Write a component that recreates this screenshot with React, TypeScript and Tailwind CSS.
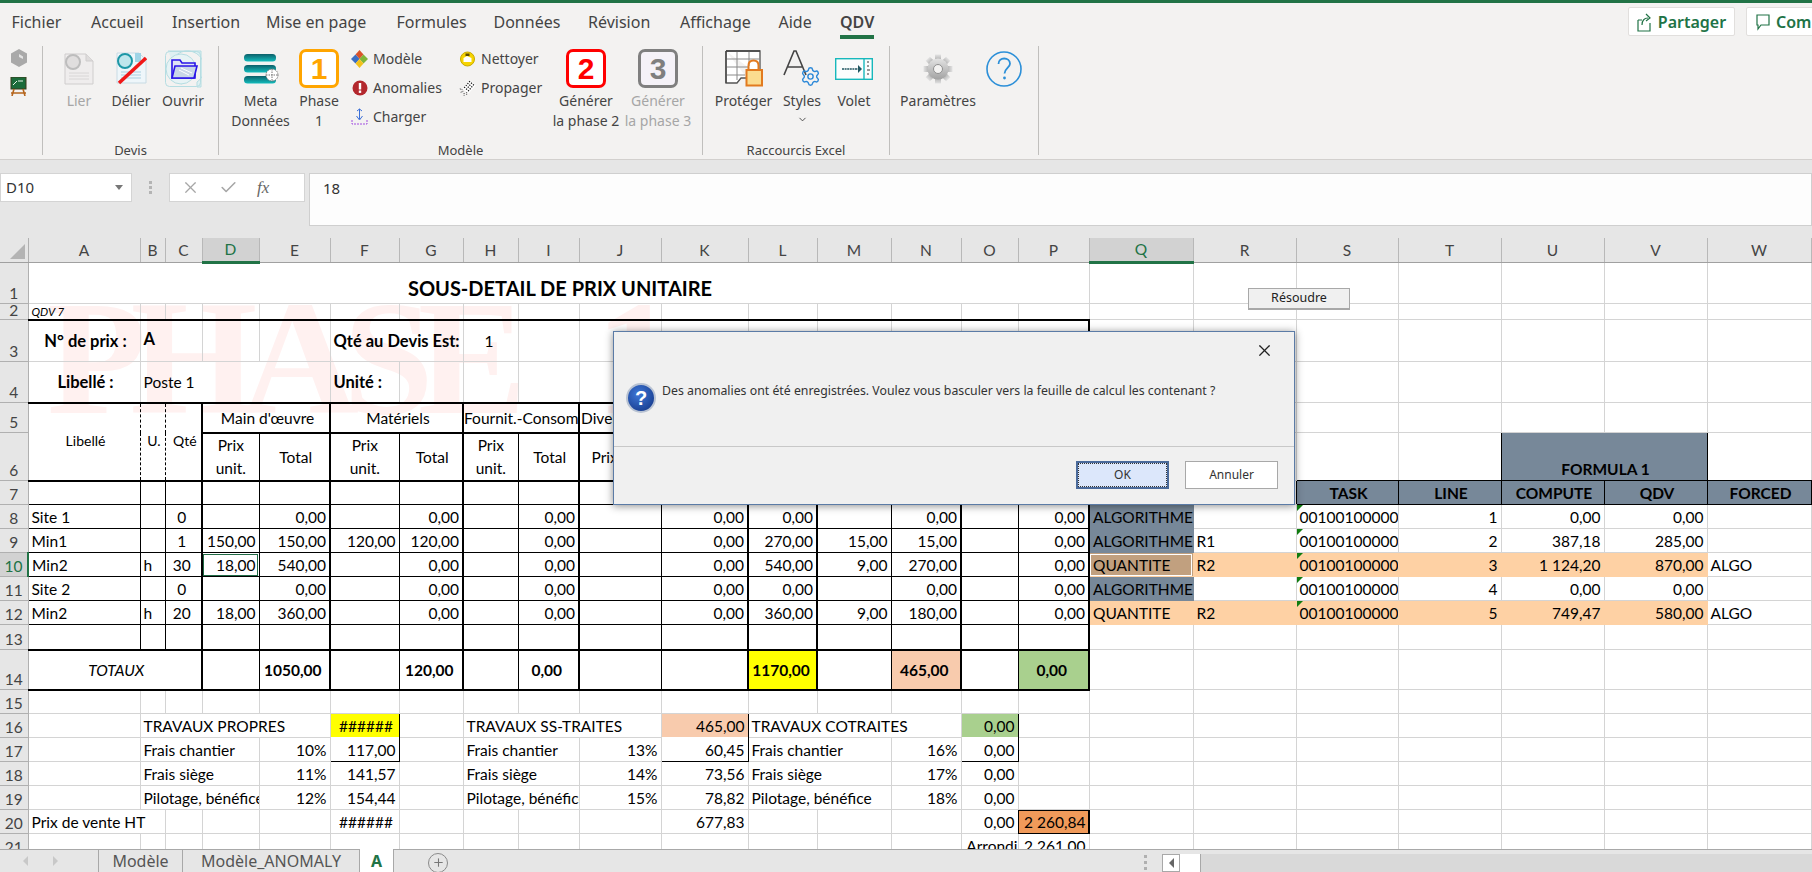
import type { ReactNode } from 'react'
import { Check, ChevronDown, Plus, Settings, X } from 'lucide-react'
import { twMerge } from 'tailwind-merge'

const COLS = 'ABCDEFGHIJKLMNOPQRSTUVW'.split('')

const COL_WIDTHS: Record<string, string> = {
  A: 'w-[112px]', B: 'w-[25px]', C: 'w-[37px]', D: 'w-[57px]', E: 'w-[71px]', F: 'w-[69px]',
  G: 'w-[64px]', H: 'w-[55px]', I: 'w-[61px]', J: 'w-[82px]', K: 'w-[87px]', L: 'w-[69px]',
  M: 'w-[74px]', N: 'w-[70px]', O: 'w-[57px]', P: 'w-[71px]', Q: 'w-[104px]', R: 'w-[103px]',
  S: 'w-[102px]', T: 'w-[103px]', U: 'w-[103px]', V: 'w-[103px]', W: 'w-[104px]',
}

const THICK_COLS = ['C', 'E', 'G', 'I', 'K', 'L', 'N', 'P']
const MAIN_COLS = COLS.slice(0, 16)

const SLATE = 'bg-[#778899] border-r-[#778899] border-b-[#778899]'
const ORANGE = 'bg-[#fed1a4] border-r-[#fed1a4] border-b-[#fed1a4]'
const HEAD = 'bg-[#778899] border-r-black border-b-black font-bold text-center'
const TOTAL = 'font-bold text-center align-middle'
const MID = 'align-middle'
const BOLD = 'font-bold align-middle text-[16.5px]'
const HEADER = 'text-center align-middle'
const UNIT = 'text-center align-middle whitespace-normal leading-[23px] px-1'
const LIBEL = 'text-center align-middle text-[14px] pb-[2px] [border-right-style:dashed] border-r-black'
const CENTER = 'text-center'
const BOX_TOP = 'border-r-black border-b-transparent'
const BOX_BOT = 'border-r-black border-b-black'

type CellDef = {
  t?: string
  span?: number
  rowSpan?: number
  cls?: string
  mark?: boolean
}

type RowDef = {
  n: number
  h: string
  main?: boolean
  bottom?: string
  skip?: string[]
  selected?: boolean
  cells: Record<string, string | CellDef>
}

const task = (cls = ''): CellDef => ({ t: '00100100000', mark: true, cls })

const ROWS: RowDef[] = [
  {
    n: 1,
    h: 'h-[40px]',
    cells: { A: { t: 'SOUS-DETAIL DE PRIX UNITAIRE', span: 16, cls: 'text-center font-bold text-[20px] align-middle pt-[9px]' } },
  },
  {
    n: 2,
    h: 'h-[16px]',
    bottom: 'border-b-2 border-b-black',
    cells: { A: { t: 'QDV 7', cls: 'italic text-[11.5px] leading-[14px] align-middle' } },
  },
  {
    n: 3,
    h: 'h-[42px]',
    cells: {
      A: { t: 'N° de prix :', cls: `${BOLD} text-center` },
      B: { t: 'A', span: 2, cls: `${BOLD} pb-[4px]` },
      F: { t: 'Qté au Devis Est:', span: 2, cls: BOLD },
      H: { t: '1', cls: `${MID} text-center` },
      P: { cls: 'border-r-2 border-r-black' },
    },
  },
  {
    n: 4,
    h: 'h-[41px]',
    bottom: 'border-b-2 border-b-black',
    cells: {
      A: { t: 'Libellé :', cls: `${BOLD} text-center` },
      B: { t: 'Poste 1', span: 4, cls: MID },
      F: { t: 'Unité :', cls: BOLD },
      P: { cls: 'border-r-2 border-r-black' },
    },
  },
  {
    n: 5,
    h: 'h-[30px]',
    main: true,
    bottom: 'border-b-2 border-b-black',
    cells: {
      A: { t: 'Libellé', rowSpan: 2, cls: LIBEL },
      B: { t: 'U.', rowSpan: 2, cls: LIBEL },
      C: { t: 'Qté', rowSpan: 2, cls: `${LIBEL} [border-right-style:solid]` },
      D: { t: "Main d'œuvre", span: 2, cls: HEADER },
      F: { t: 'Matériels', span: 2, cls: HEADER },
      H: { t: 'Fournit.-Consom', span: 2, cls: 'align-middle indent-[-3px]' },
      J: { t: 'Divers', span: 2, cls: 'align-middle pl-[1px]' },
    },
  },
  {
    n: 6,
    h: 'h-[47px]',
    main: true,
    bottom: 'border-b-2 border-b-black',
    skip: ['A', 'B', 'C'],
    cells: {
      D: { t: 'Prix unit.', cls: UNIT },
      E: { t: 'Total', cls: HEADER },
      F: { t: 'Prix unit.', cls: UNIT },
      G: { t: 'Total', cls: HEADER },
      H: { t: 'Prix unit.', cls: UNIT },
      I: { t: 'Total', cls: HEADER },
      J: { t: 'Prix unit.', cls: HEADER },
      S: { cls: 'border-b-black' },
      T: { cls: 'border-b-black border-r-black' },
      U: { t: 'FORMULA 1', span: 2, cls: HEAD },
      W: { cls: 'border-b-black' },
    },
  },
  {
    n: 7,
    h: 'h-[24px]',
    main: true,
    bottom: 'border-b-black',
    cells: {
      R: { cls: 'border-r-black' },
      S: { t: 'TASK', cls: HEAD },
      T: { t: 'LINE', cls: HEAD },
      U: { t: 'COMPUTE', cls: HEAD },
      V: { t: 'QDV', cls: HEAD },
      W: { t: 'FORCED', cls: HEAD },
    },
  },
  {
    n: 8,
    h: 'h-[24px]',
    main: true,
    bottom: 'border-b-black',
    cells: {
      A: 'Site 1', C: { t: '0', cls: CENTER }, E: '0,00', G: '0,00', I: '0,00', K: '0,00', L: '0,00', N: '0,00', P: '0,00',
      Q: { t: 'ALGORITHME', cls: SLATE }, S: task(), T: '1', U: '0,00', V: '0,00',
    },
  },
  {
    n: 9,
    h: 'h-[24px]',
    main: true,
    bottom: 'border-b-black',
    cells: {
      A: 'Min1', C: { t: '1', cls: CENTER }, D: '150,00', E: '150,00', F: '120,00', G: '120,00', I: '0,00', K: '0,00', L: '270,00', M: '15,00', N: '15,00', P: '0,00',
      Q: { t: 'ALGORITHME', cls: SLATE }, R: 'R1', S: task(), T: '2', U: '387,18', V: '285,00',
    },
  },
  {
    n: 10,
    h: 'h-[24px]',
    main: true,
    bottom: 'border-b-black',
    selected: true,
    cells: {
      A: 'Min2', B: 'h', C: { t: '30', cls: CENTER },
      D: { t: '18,00', cls: 'outline outline-1 outline-[#1f6b45] -outline-offset-2' },
      E: '540,00', G: '0,00', I: '0,00', K: '0,00', L: '540,00', M: '9,00', N: '270,00', P: '0,00',
      Q: { t: 'QUANTITE', cls: 'bg-[#c1a07f] border-r-[#fed1a4] border-b-[#fed1a4] outline outline-1 outline-white -outline-offset-2' },
      R: { t: 'R2', cls: ORANGE }, S: task(ORANGE), T: { t: '3', cls: ORANGE }, U: { t: '1 124,20', cls: ORANGE }, V: { t: '870,00', cls: ORANGE }, W: 'ALGO',
    },
  },
  {
    n: 11,
    h: 'h-[24px]',
    main: true,
    bottom: 'border-b-black',
    cells: {
      A: 'Site 2', C: { t: '0', cls: CENTER }, E: '0,00', G: '0,00', I: '0,00', K: '0,00', L: '0,00', N: '0,00', P: '0,00',
      Q: { t: 'ALGORITHME', cls: SLATE }, S: task(), T: '4', U: '0,00', V: '0,00',
    },
  },
  {
    n: 12,
    h: 'h-[24px]',
    main: true,
    bottom: 'border-b-black',
    cells: {
      A: 'Min2', B: 'h', C: { t: '20', cls: CENTER }, D: '18,00', E: '360,00', G: '0,00', I: '0,00', K: '0,00', L: '360,00', M: '9,00', N: '180,00', P: '0,00',
      Q: { t: 'QUANTITE', cls: ORANGE }, R: { t: 'R2', cls: ORANGE }, S: task(ORANGE), T: { t: '5', cls: ORANGE }, U: { t: '749,47', cls: ORANGE }, V: { t: '580,00', cls: ORANGE }, W: 'ALGO',
    },
  },
  { n: 13, h: 'h-[25px]', main: true, bottom: 'border-b-2 border-b-black', cells: {} },
  {
    n: 14,
    h: 'h-[40px]',
    main: true,
    bottom: 'border-b-2 border-b-black',
    cells: {
      A: { t: 'TOTAUX', span: 3, cls: 'italic text-center align-middle' },
      E: { t: '1050,00', cls: TOTAL },
      G: { t: '120,00', cls: TOTAL },
      I: { t: '0,00', cls: TOTAL },
      L: { t: '1170,00', cls: `${TOTAL} bg-[#ffff00]` },
      N: { t: '465,00', cls: `${TOTAL} bg-[#f8cbad]` },
      P: { t: '0,00', cls: `${TOTAL} bg-[#a9d08e]` },
    },
  },
  { n: 15, h: 'h-[24px]', cells: {} },
  {
    n: 16,
    h: 'h-[24px]',
    cells: {
      B: { t: 'TRAVAUX PROPRES', span: 4 },
      F: { t: '######', cls: `${BOX_TOP} bg-[#ffff00] text-center` },
      H: { t: 'TRAVAUX SS-TRAITES', span: 3 },
      K: { t: '465,00', cls: `${BOX_TOP} bg-[#f8cbad]` },
      L: { t: 'TRAVAUX COTRAITES', span: 3 },
      O: { t: '0,00', cls: `${BOX_TOP} bg-[#a9d08e]` },
    },
  },
  {
    n: 17,
    h: 'h-[24px]',
    cells: {
      B: { t: 'Frais chantier', span: 3 }, E: '10%', F: { t: '117,00', cls: BOX_BOT },
      H: { t: 'Frais chantier', span: 2 }, J: '13%', K: { t: '60,45', cls: BOX_BOT },
      L: { t: 'Frais chantier', span: 2 }, N: '16%', O: { t: '0,00', cls: BOX_BOT },
    },
  },
  {
    n: 18,
    h: 'h-[24px]',
    cells: {
      B: { t: 'Frais siège', span: 3 }, E: '11%', F: '141,57',
      H: { t: 'Frais siège', span: 2 }, J: '14%', K: '73,56',
      L: { t: 'Frais siège', span: 2 }, N: '17%', O: '0,00',
    },
  },
  {
    n: 19,
    h: 'h-[24px]',
    cells: {
      B: { t: 'Pilotage, bénéfice', span: 3 }, E: '12%', F: '154,44',
      H: { t: 'Pilotage, bénéfice', span: 2 }, J: '15%', K: '78,82',
      L: { t: 'Pilotage, bénéfice', span: 2 }, N: '18%', O: '0,00',
    },
  },
  {
    n: 20,
    h: 'h-[24px]',
    cells: {
      A: { t: 'Prix de vente HT', span: 2 },
      F: { t: '######', cls: CENTER },
      K: '677,83',
      O: '0,00',
      P: { t: '2 260,84', cls: 'bg-[#f09a5a] border-r-black border-b-black outline outline-1 outline-black -outline-offset-1' },
    },
  },
  {
    n: 21,
    h: 'h-[24px]',
    cells: { O: { t: 'Arrondi', cls: 'text-right' }, P: '2 261,00' },
  },
]

function isNumeric(text?: string) {
  return !!text && /^[\d ,%]+$/.test(text)
}

function SheetCell({ col, last, row, cell }: { col: string; last: string; row: RowDef; cell: CellDef }) {
  const inMain = MAIN_COLS.includes(col)
  const right = row.main && inMain ? (THICK_COLS.includes(last) ? 'border-r-2 border-r-black' : 'border-r-black') : ''
  const bottom = inMain ? row.bottom : ''
  const align = isNumeric(cell.t) && !cell.mark ? 'text-right pr-[3px]' : 'pl-[3px]'

  return (
    <td
      colSpan={cell.span}
      rowSpan={cell.rowSpan}
      className={twMerge(
        'relative p-0 border-r border-b border-r-[#d4d4d4] border-b-[#d4d4d4] align-bottom whitespace-nowrap overflow-hidden leading-[22px]',
        align,
        right,
        bottom,
        cell.cls,
      )}
    >
      {cell.mark && (
        <span className="absolute top-0 left-0 w-0 h-0 border-t-[6px] border-r-[6px] border-t-[#107c10] border-r-transparent" />
      )}
      {cell.t}
    </td>
  )
}

function SheetRow({ row }: { row: RowDef }) {
  const tds: ReactNode[] = []
  for (let i = 0; i < COLS.length; i++) {
    const col = COLS[i]
    if (row.skip?.includes(col)) continue
    const raw = row.cells[col] ?? {}
    const cell: CellDef = typeof raw === 'string' ? { t: raw } : raw
    const span = cell.span ?? 1
    tds.push(<SheetCell key={col} col={col} last={COLS[i + span - 1]} row={row} cell={cell} />)
    i += span - 1
  }

  return (
    <tr className={row.h}>
      <td
        className={twMerge(
          'p-0 bg-[#e6e6e6] text-[#444] text-center align-bottom leading-[20px] border-r border-b border-r-[#b0b0b0] border-b-[#b0b0b0] overflow-hidden',
          row.n === 2 && 'leading-[12px] pb-[3px]',
          row.selected && 'bg-[#d2d2d2] text-[#217346] border-r-2 border-r-[#217346]',
        )}
      >
        {row.n}
      </td>
      {tds}
    </tr>
  )
}

function Spreadsheet() {
  return (
    <table className="relative table-fixed border-collapse w-[1811px] text-[15.5px] text-black font-['Lato',sans-serif]">
      <colgroup>
        <col className="w-[28px]" />
        {COLS.map((col) => (
          <col key={col} className={COL_WIDTHS[col]} />
        ))}
      </colgroup>
      <thead>
        <tr className="h-[24px]">
          <th className="p-0 bg-[#e6e6e6] border-r border-b border-r-[#b0b0b0] border-b-[#a0a0a0]">
            <div className="flex justify-end items-end h-[23px] pr-[3px] pb-[3px]">
              <svg width="15" height="15" viewBox="0 0 15 15">
                <path d="M15 0V15H0Z" fill="#b4b4b4" />
              </svg>
            </div>
          </th>
          {COLS.map((col) => {
            const active = col === 'D' || col === 'Q'
            return (
              <th
                key={col}
                className={twMerge(
                  'p-0 font-normal bg-[#e6e6e6] text-[#444] border-r border-b border-r-[#b8b8b8] border-b-[#a0a0a0]',
                  active && 'bg-[#d2d2d2] text-[#217346] border-b-[3px] border-b-[#217346]',
                )}
              >
                {col}
              </th>
            )
          })}
        </tr>
      </thead>
      <tbody>
        {ROWS.map((row) => (
          <SheetRow key={row.n} row={row} />
        ))}
      </tbody>
    </table>
  )
}

function MetaIcon() {
  return (
    <svg width="36" height="30" viewBox="0 0 36 30">
      <defs>
        <linearGradient id="metaBar" x1="0" y1="0" x2="0" y2="1">
          <stop offset="0" stopColor="#0c5f69" />
          <stop offset="1" stopColor="#12bdbd" />
        </linearGradient>
      </defs>
      <rect x="1" y="0" width="32" height="7.5" rx="3.5" fill="url(#metaBar)" />
      <rect x="1" y="11" width="32" height="7.5" rx="3.5" fill="url(#metaBar)" />
      <rect x="1" y="22" width="32" height="7.5" rx="3.5" fill="url(#metaBar)" />
      <circle cx="29" cy="21" r="6" fill="#fff" stroke="#777" strokeDasharray="1.5 1" />
      <path d="M23 21h12M29 15v12" stroke="#777" strokeDasharray="1.5 1" />
    </svg>
  )
}

function LierIcon() {
  return (
    <svg width="30" height="32" viewBox="0 0 30 32">
      <path d="M1 1H22L29 8V31H1Z" fill="#efeded" stroke="#cfcdcd" />
      <path d="M22 1V8H29" fill="#dedcdc" stroke="#cfcdcd" />
      <circle cx="9" cy="9" r="7" fill="#e0dede" stroke="#bdbdbd" strokeWidth="2" />
      <path d="M5 20H25M5 23H25M5 26H25" stroke="#d8d6d6" />
    </svg>
  )
}

function DelierIcon() {
  return (
    <svg width="32" height="33" viewBox="0 0 32 33">
      <path d="M2 1H24L31 8V31H2Z" fill="#eef6fa" stroke="#c8dbe4" />
      <path d="M20 1H26V10H20Z" fill="#9fd4e6" />
      <circle cx="10" cy="9" r="7" fill="#bfe6ec" stroke="#1d97a6" strokeWidth="2" />
      <path d="M6 20H26M6 23H26M6 26H26" stroke="#a9cfe0" />
      <path d="M4 31L31 6" stroke="#f01818" strokeWidth="3.5" />
    </svg>
  )
}

function OuvrirIcon() {
  return (
    <svg width="38" height="38" viewBox="0 0 38 38">
      <path d="M4 1H37V37H33V32A17 17 0 1 0 18 34" fill="#dff0f2" stroke="#b5dde2" />
      <circle cx="17" cy="19" r="15" fill="#e7f3f5" stroke="#b5dde2" />
      <rect x="1.5" y="1.5" width="35" height="35" rx="4" fill="none" stroke="#b5dde2" />
      <path d="M8 10H16L18 13H31V28H8Z" fill="#dfe4f4" stroke="#2a14e8" strokeWidth="1.6" />
      <path d="M8 28L11 16H33L30 28Z" fill="#c9d6e8" stroke="#2a14e8" strokeWidth="1.6" />
      <path d="M15 20L25 25M17 18L28 23" stroke="#fff" />
    </svg>
  )
}

function PhaseBox({ n, cls }: { n: string; cls: string }) {
  return (
    <div
      className={twMerge(
        "flex items-center justify-center w-[40px] h-[39px] rounded-[7px] border-[3px] text-[30px] font-bold font-['Liberation_Sans',sans-serif]",
        cls,
      )}
    >
      {n}
    </div>
  )
}

function ModeleIcon() {
  return (
    <svg width="17" height="18" viewBox="0 0 17 18">
      <path d="M8.5 0L12.5 4.5L8.5 9L4.5 4.5Z" fill="#d9542b" />
      <path d="M12.5 4.5L17 9L12.5 13.5L8.5 9Z" fill="#7fb539" />
      <path d="M4.5 4.5L8.5 9L4.5 13.5L0 9Z" fill="#3b6fc4" />
      <path d="M8.5 9L12.5 13.5L8.5 18L4.5 13.5Z" fill="#f2c11c" />
    </svg>
  )
}

function AnomalieIcon() {
  return (
    <svg width="16" height="16" viewBox="0 0 16 16">
      <circle cx="8" cy="8" r="7.5" fill="#b3282d" />
      <rect x="6.8" y="3" width="2.4" height="6.5" fill="#fff" />
      <rect x="6.8" y="10.5" width="2.4" height="2.4" fill="#fff" />
    </svg>
  )
}

function ChargerIcon() {
  return (
    <svg width="17" height="18" viewBox="0 0 17 18">
      <path d="M8.5 1V11M6 3L8.5 1L11 3M5.5 8L8.5 12L11.5 8" fill="none" stroke="#3a6fd8" />
      <path d="M1 12V16H16V12" fill="none" stroke="#a24fe0" strokeDasharray="2 1" />
    </svg>
  )
}

function NettoyerIcon() {
  return (
    <svg width="15" height="16" viewBox="0 0 15 16">
      <circle cx="7.5" cy="8" r="7" fill="#f6d400" stroke="#c9a900" />
      <path d="M3.5 11V7L7 5L11.5 7V11Z" fill="#fff" />
      <path d="M5.5 2.5H9.5V5H5.5Z" fill="#5c4a00" />
    </svg>
  )
}

function PropagerIcon() {
  return (
    <svg width="20" height="20" viewBox="0 0 20 20">
      <g transform="rotate(40 12 8)">
        <rect x="8" y="2" width="9" height="13" fill="#fff" />
        <path d="M8 3.5H17M8 6.5H17M8 9.5H17M8 12.5H17" stroke="#111" strokeWidth="1.4" strokeDasharray="1.5 1.5" />
      </g>
      <path d="M1 11L4 12M2 15L5 14M6 16V19M9 15V18" stroke="#111" strokeDasharray="1.2 1" />
    </svg>
  )
}

function ProtegerIcon() {
  return (
    <svg width="38" height="37" viewBox="0 0 38 37">
      <path d="M1 1H35V26M1 1V33H12L16 28H22" fill="#fff" stroke="#555" strokeWidth="1.3" />
      <path d="M1 9H35M1 17H24M1 25H20M12 1V30M24 1V16" stroke="#8a8a8a" />
      <path d="M1 1H35M1 1V33" stroke="#444" strokeWidth="1.3" fill="none" />
      <path d="M23.5 20V15.5C23.5 12.5 25.5 10.5 28.5 10.5S33.5 12.5 33.5 15.5V20" fill="none" stroke="#e27a1f" strokeWidth="2" />
      <rect x="21.5" y="20" width="15.5" height="15.5" fill="#fbdc8f" stroke="#e27a1f" strokeWidth="2" />
    </svg>
  )
}

function StylesIcon() {
  return (
    <div className="relative w-[38px] h-[37px]">
      <svg width="24" height="26" viewBox="0 0 24 26" className="absolute left-0 top-0">
        <path d="M1 25L11 1H13L23 25M5 17H19" fill="none" stroke="#444" strokeWidth="1.6" />
      </svg>
      <Settings size={21} strokeWidth={1.6} className="absolute right-0 bottom-0 text-[#2b88d8]" />
    </div>
  )
}

function VoletIcon() {
  return (
    <svg width="38" height="22" viewBox="0 0 38 22">
      <rect x="0.7" y="0.7" width="36.6" height="20.6" fill="#fbfdfd" stroke="#17b8bc" strokeWidth="1.4" />
      <path d="M29 1V21" stroke="#17b8bc" strokeWidth="1.4" />
      <path d="M7 11H24" stroke="#1f5660" strokeWidth="1.4" strokeDasharray="2 0.6" />
      <path d="M23 7L27 11L23 15Z" fill="#1f5660" />
      <path d="M32 4H34M32 8H34M32 12H35M32 16H34" stroke="#333" />
    </svg>
  )
}

function GearIcon() {
  const teeth = [0, 45, 90, 135, 180, 225, 270, 315]
  return (
    <svg width="30" height="30" viewBox="0 0 30 30">
      <defs>
        <linearGradient id="gear" x1="0" y1="0" x2="0" y2="1">
          <stop offset="0" stopColor="#e3e3e3" />
          <stop offset="1" stopColor="#a2a2a2" />
        </linearGradient>
      </defs>
      {teeth.map((angle) => (
        <rect key={angle} x="12" y="0.5" width="6" height="7" fill="url(#gear)" transform={`rotate(${angle} 15 15)`} />
      ))}
      <circle cx="15" cy="15" r="10.5" fill="url(#gear)" />
      <circle cx="15" cy="15" r="4.5" fill="#f3f2f1" stroke="#8f8f8f" />
    </svg>
  )
}

function HelpIcon() {
  return (
    <svg width="36" height="36" viewBox="0 0 36 36">
      <circle cx="18" cy="18" r="17" fill="none" stroke="#2b8fd8" strokeWidth="1.6" />
      <path d="M12.5 13C12.5 9.5 15 7.5 18.2 7.5S24 9.5 24 12.7C24 16.5 18.5 17.5 18.5 22.5" fill="none" stroke="#2b8fd8" strokeWidth="1.8" />
      <circle cx="18.5" cy="27" r="1.4" fill="#2b8fd8" />
    </svg>
  )
}

function BigButton({
  icon,
  lines,
  width,
  disabled,
  extra,
}: {
  icon: ReactNode
  lines: string[]
  width: string
  disabled?: boolean
  extra?: ReactNode
}) {
  return (
    <div className={twMerge('flex flex-col items-center shrink-0', width)}>
      <div className="flex items-center justify-center h-[45px]">{icon}</div>
      {lines.map((line) => (
        <div key={line} className={twMerge('leading-[20px] whitespace-nowrap', disabled && 'text-[#a6a6a6]')}>
          {line}
        </div>
      ))}
      {extra}
    </div>
  )
}

function SmallButton({ icon, label }: { icon: ReactNode; label: string }) {
  return (
    <div className="flex items-center h-[25px] whitespace-nowrap">
      <div className="flex items-center justify-center w-[17px] mr-[5px]">{icon}</div>
      {label}
    </div>
  )
}

function RibbonGroup({ label, width, pad, children }: { label?: string; width: string; pad: string; children: ReactNode }) {
  return (
    <div className={twMerge('flex flex-col h-[109px] shrink-0 border-r border-r-[#c0bfbd]', width)}>
      <div className={twMerge('flex h-[95px]', pad)}>{children}</div>
      {label && <div className="h-[14px] text-center text-[13px] leading-[18px]">{label}</div>}
    </div>
  )
}

const TABS = [
  { label: 'Fichier', width: 'w-[79.5px]' },
  { label: 'Accueil', width: 'w-[81px]' },
  { label: 'Insertion', width: 'w-[94px]' },
  { label: 'Mise en page', width: 'w-[130.5px]' },
  { label: 'Formules', width: 'w-[97px]' },
  { label: 'Données', width: 'w-[94.5px]' },
  { label: 'Révision', width: 'w-[92px]' },
  { label: 'Affichage', width: 'w-[98.5px]' },
  { label: 'Aide', width: 'w-[61.5px]' },
]

function TabBar() {
  return (
    <div className="flex h-[43px] pl-[11.5px] text-[16px]">
      {TABS.map((tab) => (
        <div key={tab.label} className={twMerge('pt-[8px] leading-[22px] whitespace-nowrap', tab.width)}>
          {tab.label}
        </div>
      ))}
      <div className="h-[36px] pt-[8px] leading-[22px] font-semibold border-b-4 border-b-[#217346]">QDV</div>
      <div className="ml-auto flex gap-[11px] w-[184px] shrink-0 overflow-hidden pt-[4px] text-[#217346] font-semibold">
        <div className="flex items-center justify-center gap-[6px] w-[107px] h-[29px] shrink-0 bg-white border border-[#e1dfdd] rounded-[2px]">
          <svg width="15" height="20" viewBox="0 0 15 20" className="shrink-0">
            <path d="M1 8V19H13V11M1 8H5M5 13C5 8 8 6 11 6M9 2L13 6L9 9" fill="none" stroke="#217346" strokeWidth="1.2" />
          </svg>
          Partager
        </div>
        <div className="flex items-center gap-[6px] w-[80px] h-[29px] shrink-0 pl-[9px] bg-white border border-[#e1dfdd] rounded-[2px]">
          <svg width="14" height="18" viewBox="0 0 14 18" className="shrink-0">
            <path d="M1 2H13V12H5L2 16V12H1Z" fill="none" stroke="#217346" strokeWidth="1.2" />
          </svg>
          Com
        </div>
      </div>
    </div>
  )
}

function Ribbon() {
  return (
    <div className="flex h-[114px] border-b border-b-[#d2d0ce] text-[14px] text-[#444]">
      <RibbonGroup width="w-[43px]" pad="flex-col items-center gap-[10px] pt-[3px] pr-[5px]">
        <svg width="16" height="18" viewBox="0 0 16 18">
          <path d="M8 0L16 4.5V13.5L8 18L0 13.5V4.5Z" fill="#a9a9a9" />
          <path d="M8 5L12 7.5V10L8 8Z" fill="#e3e3e3" />
        </svg>
        <svg width="17" height="19" viewBox="0 0 17 19">
          <rect x="1" y="0" width="15" height="12" fill="#1b6b3a" stroke="#3b3b1b" />
          <path d="M3 8L7 4M8 4H13" stroke="#eaf5ea" />
          <path d="M4 12L2 19M13 12L15 19M1 16H16" stroke="#b5651d" strokeWidth="1.6" />
        </svg>
      </RibbonGroup>
      <RibbonGroup label="Devis" width="w-[176px]" pad="pl-[10px]">
        <BigButton icon={<LierIcon />} lines={['Lier']} width="w-[52px]" disabled />
        <BigButton icon={<DelierIcon />} lines={['Délier']} width="w-[52px]" />
        <BigButton icon={<OuvrirIcon />} lines={['Ouvrir']} width="w-[52px]" />
      </RibbonGroup>
      <RibbonGroup label="Modèle" width="w-[484px]" pad="pl-[3px]">
        <BigButton icon={<MetaIcon />} lines={['Meta', 'Données']} width="w-[77px]" />
        <BigButton
          icon={<PhaseBox n="1" cls="border-[#ffa500] text-[#ffa500] bg-white" />}
          lines={['Phase', '1']}
          width="w-[40px]"
        />
        <div className="flex flex-col gap-[4px] w-[120px] pl-[12px] shrink-0">
          <SmallButton icon={<ModeleIcon />} label="Modèle" />
          <SmallButton icon={<AnomalieIcon />} label="Anomalies" />
          <SmallButton icon={<ChargerIcon />} label="Charger" />
        </div>
        <div className="flex flex-col gap-[4px] w-[91px] shrink-0">
          <SmallButton icon={<NettoyerIcon />} label="Nettoyer" />
          <SmallButton icon={<PropagerIcon />} label="Propager" />
        </div>
        <BigButton
          icon={<PhaseBox n="2" cls="border-[#ff0000] text-[#ff0000] bg-white" />}
          lines={['Générer', 'la phase 2']}
          width="w-[72px]"
        />
        <BigButton
          icon={<PhaseBox n="3" cls="border-[#7f7f7f] text-[#7f7f7f] bg-[#f5f2f8]" />}
          lines={['Générer', 'la phase 3']}
          width="w-[72px]"
          disabled
        />
      </RibbonGroup>
      <RibbonGroup label="Raccourcis Excel" width="w-[187px]" pad="pl-[9px]">
        <BigButton icon={<ProtegerIcon />} lines={['Protéger']} width="w-[63px]" />
        <BigButton
          icon={<StylesIcon />}
          lines={['Styles']}
          width="w-[54px]"
          extra={<ChevronDown size={11} className="mt-[3px]" />}
        />
        <BigButton icon={<VoletIcon />} lines={['Volet']} width="w-[50px]" />
      </RibbonGroup>
      <RibbonGroup width="w-[149px]" pad="pl-[8px]">
        <BigButton icon={<GearIcon />} lines={['Paramètres']} width="w-[80px]" />
        <BigButton icon={<HelpIcon />} lines={[]} width="w-[52px]" />
      </RibbonGroup>
    </div>
  )
}

function FormulaBar() {
  return (
    <div className="flex h-[78px] pt-[13px] bg-[#e6e6e6] text-[#333] text-[15px]">
      <div className="flex items-center justify-between w-[132px] h-[29px] pl-[5px] pr-[8px] bg-white border border-[#d4d4d4]">
        D10
        <span className="w-0 h-0 border-x-[4px] border-x-transparent border-t-[5px] border-t-[#777]" />
      </div>
      <div className="flex flex-col justify-center gap-[2px] w-[37px] h-[29px] pl-[17px]">
        <span className="w-[3px] h-[3px] bg-[#b4b4b4]" />
        <span className="w-[3px] h-[3px] bg-[#b4b4b4]" />
        <span className="w-[3px] h-[3px] bg-[#b4b4b4]" />
      </div>
      <div className="flex items-center w-[136px] h-[29px] pl-[11px] gap-[19px] bg-white border border-[#d4d4d4] text-[#a6a6a6]">
        <X size={19} strokeWidth={1.5} />
        <Check size={19} strokeWidth={2} />
        <span className="text-[17px] text-[#666] italic font-['Liberation_Serif',serif]">fx</span>
      </div>
      <div className="flex-1 h-[53px] ml-[4px] pl-[13px] pt-[3px] bg-[#fdfdfd] border border-[#cfcfcf] leading-[22px]">18</div>
    </div>
  )
}

function QuestionIcon() {
  return (
    <div className="flex items-center justify-center w-[30px] h-[30px] mt-[1px] shrink-0 rounded-full bg-[radial-gradient(circle_at_40%_35%,#3f78d8,#10307f)] border-2 border-[#b9c3d3] text-white text-[20px] font-bold font-['Liberation_Sans',sans-serif]">
      ?
    </div>
  )
}

function AnomalyDialog() {
  return (
    <div className="absolute left-[613px] top-[93px] flex flex-col w-[682px] h-[174px] bg-[#f0f0f0] border border-[#5b7ba6] shadow-[0_1px_8px_rgba(0,0,0,0.45)] font-['Noto_Sans',sans-serif]">
      <div className="flex justify-end h-[38px] pt-[9px] pr-[20px] text-[#222]">
        <X size={19} strokeWidth={1.5} />
      </div>
      <div className="flex h-[77px] pt-[12px] pl-[12px] gap-[6px] text-[12.3px] text-[#333] border-b border-b-[#c8c8c8]">
        <QuestionIcon />
        <div className="leading-[18px]">
          Des anomalies ont été enregistrées. Voulez vous basculer vers la feuille de calcul les contenant ?
        </div>
      </div>
      <div className="flex justify-end gap-[16px] pt-[14px] pr-[16px] text-[12px] text-[#333]">
        <div className="flex items-center justify-center w-[93px] h-[28px] bg-[#dce7fb] border-2 border-[#4a6a9b] outline outline-1 outline-dotted outline-[#333] -outline-offset-3">
          OK
        </div>
        <div className="flex items-center justify-center w-[93px] h-[28px] bg-white border border-[#a8a8a8]">Annuler</div>
      </div>
    </div>
  )
}

function SheetTabs() {
  return (
    <div className="flex h-[23px] bg-[#e6e6e6] border-t border-t-[#a8a8a8] text-[16px] text-[#555] font-['Noto_Sans',sans-serif]">
      <div className="flex items-center justify-between w-[99px] pl-[23px] pr-[40px] border-r border-r-[#a8a8a8] text-[#c4c4c4] text-[10px]">
        <span className="w-0 h-0 border-y-[5px] border-y-transparent border-r-[5px] border-r-[#c8c8c8]" />
        <span className="w-0 h-0 border-y-[5px] border-y-transparent border-l-[5px] border-l-[#c8c8c8]" />
      </div>
      <div className="flex items-center justify-center w-[84px] border-r border-r-[#a8a8a8]">Modèle</div>
      <div className="flex items-center justify-center w-[176px]">Modèle_ANOMALY</div>
      <div className="flex items-center justify-center w-[35px] -mt-px bg-white border-x border-x-[#a8a8a8] text-[#217346] font-bold">A</div>
      <div className="flex items-center justify-center w-[88px]">
        <div className="flex items-center justify-center w-[20px] h-[20px] mt-[3px] rounded-full border border-[#8a8a8a] text-[#777]">
          <Plus size={13} strokeWidth={2} />
        </div>
      </div>
      <div className="flex flex-col justify-center gap-[3px] w-[680px] pl-[662px] mt-[3px]">
        <span className="w-[3px] h-[3px] bg-[#b0b0b0]" />
        <span className="w-[3px] h-[3px] bg-[#b0b0b0]" />
        <span className="w-[3px] h-[3px] bg-[#b0b0b0]" />
      </div>
      <div className="flex flex-1 mt-[4px] bg-[#d9d9d9]">
        <div className="flex items-center justify-center w-[18px] bg-white border border-[#a8a8a8]">
          <span className="w-0 h-0 border-y-[5px] border-y-transparent border-r-[5px] border-r-[#666]" />
        </div>
        <div className="w-[21px] bg-white border-r border-r-[#a8a8a8]" />
      </div>
    </div>
  )
}

export default function App() {
  return (
    <div className="flex flex-col w-[1812px] h-[872px] overflow-hidden bg-[#f3f2f1] text-[#444] text-[14px] font-['Noto_Sans',sans-serif]">
      <div className="h-[3px] bg-[#217346]" />
      <TabBar />
      <Ribbon />
      <FormulaBar />
      <div className="relative h-[611px] overflow-hidden bg-white">
        <div className="absolute left-[47px] top-[39px] text-[163px] leading-none font-bold tracking-[-16px] [word-spacing:60px] text-[#fff1f0] whitespace-nowrap font-['Liberation_Serif',serif]">
          PHASE 1
        </div>
        <Spreadsheet />
        <div className="absolute left-[1248px] top-[50px] flex items-center justify-center w-[102px] h-[22px] bg-[#f0f0f0] border border-[#a8a8a8] border-b-2 text-[12.5px] text-[#222]">
          Résoudre
        </div>
        <AnomalyDialog />
      </div>
      <SheetTabs />
    </div>
  )
}
